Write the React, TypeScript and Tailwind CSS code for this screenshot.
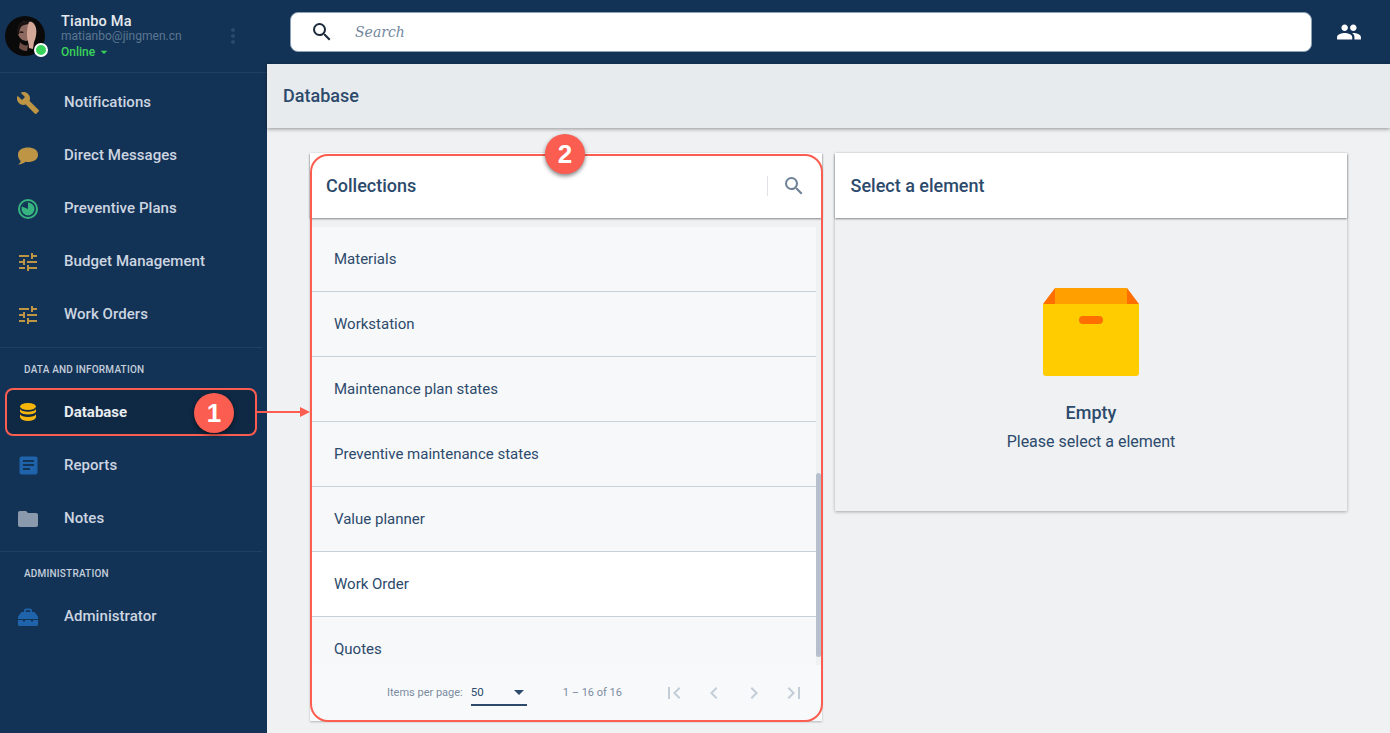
import React from "react";
import { MdBuild, MdTune, MdFolder, MdPeople, MdSearch, MdFirstPage, MdLastPage, MdChevronLeft, MdChevronRight, MdArrowDropDown, MdMoreVert } from "react-icons/md";

const Bubble = () => (
  <svg width="20" height="20" viewBox="0 0 20 20"><path fill="#bd9545" d="M10 1.500c5.400 0 10 2.200 10 7.200 0 5-4.600 7.300-10 7.300-.8 0-1.700 0-2.400-.2C6.100 17.300 3.300 18.300.2 18.500c1.300-1 2.200-2 2.500-3.600C1 13.500 0 11.300 0 8.700 0 3.700 4.600 1.500 10 1.500z"/></svg>
);
const Donut = () => (
  <svg width="20" height="20" viewBox="0 0 20 20"><circle cx="10" cy="10" r="9" fill="none" stroke="#36b37e" strokeWidth="2"/><circle cx="10" cy="10" r="6.500" fill="#36b37e"/><path d="M10 10V3.500A6.500 6.500 0 0 0 4 7.500z" fill="#133356"/></svg>
);
const Db = () => (
  <svg width="16" height="18" viewBox="0 0 16 18"><ellipse cx="8" cy="3.500" rx="8" ry="3.500" fill="#f5b50a"/><path d="M0 6c1 1.800 4 2.800 8 2.800S15 7.800 16 6v2.700c-1 1.800-4 2.800-8 2.800S1 10.500 0 8.700z" fill="#f5b50a"/><path d="M0 11.300c1 1.800 4 2.800 8 2.800s7-1 8-2.800v3.200c-1 2-4 3.500-8 3.500S1 16.500 0 14.500z" fill="#f5b50a"/></svg>
);
const Report = () => (
  <svg width="19" height="19" viewBox="0 0 19 19"><rect width="18" height="18" x=".5" y=".5" rx="2" fill="#1f63ab"/><path d="M4 5h11M4 9h11M4 13h7" stroke="#133356" strokeWidth="1.800"/></svg>
);
const Toolbox = () => (
  <svg width="20" height="18" viewBox="0 0 20 18"><path fill="#1f63ab" d="M6 4V2.500C6 1.300 7 .5 8 .5h4c1 0 2 .8 2 2V4h2.500L20 8.500V11H0V8.500L3.500 4zm1.800 0h4.400V2.300H7.800zM0 12h5v1.500h2V12h6v1.500h2V12h5v4.500c0 .8-.6 1.500-1.500 1.500h-17C.6 18 0 17.300 0 16.500z"/></svg>
);
const Avatar = () => (
  <svg width="40" height="40" viewBox="0 0 40 40">
    <clipPath id="av"><circle cx="20" cy="20" r="20"/></clipPath>
    <g clipPath="url(#av)">
      <rect width="40" height="40" fill="#0b0a0b"/>
      <ellipse cx="21" cy="15" rx="8.500" ry="10" fill="#8f6a60"/>
      <path d="M12 12c2-6 8-8 14-7 3 .5 4 2 4 4-5-1-10-1-13 1-2 1.500-3 5-3 9-2-2-3-4-2-7z" fill="#1a1312"/>
      <path d="M14 16c1-1 3-1 5 0l-1 1h-3z" fill="#2b1d1a"/>
      <path d="M15 26c2 3 6 4 8 3l-1 6c-3 0-6-1-8-3z" fill="#6e4f48"/>
      <path d="M24 6c3-1 6 2 7 6 1 4 0 10-2 14l-1 7-4-1c0-5-2-8-2-12 0-5 0-10 2-14z" fill="#d4a898"/>
    </g>
  </svg>
);

const items1 = [
  { l: "Notifications", i: <MdBuild size={24} className="text-[#bd9545]" /> },
  { l: "Direct Messages", i: <Bubble /> },
  { l: "Preventive Plans", i: <Donut /> },
  { l: "Budget Management", i: <MdTune size={24} className="text-[#bd9545]" /> },
  { l: "Work Orders", i: <MdTune size={24} className="text-[#bd9545]" /> },
];
const items2 = [
  { l: "Database", i: <Db />, active: true },
  { l: "Reports", i: <Report /> },
  { l: "Notes", i: <MdFolder size={24} className="text-[#8a99ab]" /> },
];

function NavItem({ l, i, active }: { l: string; i: React.ReactNode; active?: boolean }) {
  if (active) {
    return (
      <div className="flex h-[53px] pb-[3px] pl-[6px] pr-[11px] pt-[2px]">
        <div className="flex flex-1 items-center rounded-[8px] bg-[#0f2843]">
          <div className="ml-[10px] flex w-[24px] justify-center">{i}</div>
          <span className="ml-[24px] text-[15px] font-bold text-[#e8ecf0]">{l}</span>
        </div>
      </div>
    );
  }
  return (
    <div className="flex h-[53px] items-center">
      <div className="ml-[16px] flex w-[24px] justify-center">{i}</div>
      <span className="ml-[24px] text-[15px] font-medium tracking-[0.05px] text-[#ccd5e0]">{l}</span>
    </div>
  );
}

const SectionLabel = ({ t }: { t: string }) => (
  <div className="flex h-[42px] items-center pl-[24px] text-[10px] font-medium uppercase tracking-[0.2px] text-[#c4cedb]">{t}</div>
);

const rows = ["Materials", "Workstation", "Maintenance plan states", "Preventive maintenance states", "Value planner", "Work Order", "Quotes"];

export default function App() {
  return (
    <div className="relative flex h-[733px] w-[1390px] overflow-hidden bg-[#eff1f3] text-[#2c4a6b]" style={{ fontFamily: "Roboto, sans-serif" }}>
      <aside className="w-[267px] shrink-0 bg-[#133356]">
        <div className="flex h-[73px] border-b border-[#1e4064] pl-[5px] pt-[16px]">
          <div className="relative h-[40px] w-[40px]">
            <Avatar />
            <div className="absolute left-[29px] top-[27px] h-[14px] w-[14px] rounded-full border-2 border-white bg-[#38d35a]" />
          </div>
          <div className="-mt-[3px] ml-[16px] w-[124px]">
            <div className="h-[18px] text-[14.500px] font-medium leading-[18px] tracking-[0.2px] text-[#e6eaef]">Tianbo Ma</div>
            <div className="-mt-[2px] h-[15px] text-[12px] leading-[15px] tracking-[0.03px] text-[#5b7690]">matianbo@jingmen.cn</div>
            <div className="flex h-[15px] items-center text-[12px] font-medium text-[#38d35a]">Online<MdArrowDropDown size={16} className="ml-[1px] text-[#38d35a]" /></div>
          </div>
          <MdMoreVert size={24} className="ml-[36px] mt-[8px] text-[#2a4a6c]" />
        </div>
        <nav className="pt-[3px]">
          {items1.map((x) => <NavItem key={x.l} {...x} />)}
          <div className="mr-[5px] mt-[6px] border-t border-[#1e4064]" />
          <SectionLabel t="Data and information" />
          <div className="-mt-[4px]">{items2.map((x) => <NavItem key={x.l} {...x} />)}</div>
          <div className="mr-[5px] mt-[6px] border-t border-[#1e4064]" />
          <SectionLabel t="Administration" />
          <div className="-mt-[4px]"><NavItem l="Administrator" i={<Toolbox />} /></div>
        </nav>
      </aside>

      <main className="flex min-w-0 flex-1 flex-col">
        <header className="flex h-[64px] shrink-0 items-center bg-[#133356] pl-[23px]">
          <div className="flex h-[40px] w-[1022px] items-center rounded-[8px] border border-[#8ea0b4] bg-white pl-[19px]">
            <MdSearch size={24} className="text-[#1b2b3c]" />
            <span className="ml-[21px] text-[14px] italic text-[#7388a0]" style={{ fontFamily: "'DejaVu Serif', serif" }}>Search</span>
          </div>
          <MdPeople size={26} className="ml-[24px] text-white" />
        </header>
        <div className="flex h-[64px] shrink-0 items-center bg-[#e8ebee] pb-[2px] pl-[16px] text-[18px] font-medium shadow-[0_1px_4px_rgba(0,0,0,0.4)]">Database</div>

        <div className="flex gap-[13px] pl-[43px] pt-[25px]">
          <section className="h-[568px] w-[512px] bg-[#f8f9fb] shadow-[0_1px_2px_rgba(0,0,0,0.25)]">
            <div className="relative z-10 flex h-[65px] items-center justify-between bg-white pl-[16px] pr-[16px] shadow-[0_1px_2px_rgba(0,0,0,0.45)]">
              <span className="text-[18px] font-medium">Collections</span>
              <div className="flex h-[20px] items-center border-l border-[#dfe3e8] pl-[14px]"><MdSearch size={24} className="text-[#6d8196]" /></div>
            </div>
            <div className="flex h-[447px] bg-[#eff1f3] pt-[9px]">
              <div className="h-full w-[506px] overflow-hidden bg-[#f7f8fa]">
                {rows.map((r) => (
                  <div key={r} className={`flex h-[65px] items-center border-b border-[#c8d0d8] pl-[24px] text-[15px] ${r === "Work Order" ? "bg-white" : ""}`}>{r}</div>
                ))}
              </div>
              <div className="h-full w-[6px]">
                <div className="mt-[246px] h-[184px] w-[5px] rounded-[3px] bg-[#b5c0cc]" />
              </div>
            </div>
            <div className="flex h-[56px] items-center pl-[77px] pb-[1px] text-[11px] text-[#7b8ca0]">
              <span className="mt-[2px]">Items per page:</span>
              <div className="ml-[8px] flex h-[27px] w-[56px] items-center justify-between border-b-2 border-[#2c4a6b] text-[11.500px] text-[#2c4a6b]">
                <span className="mt-[3px]">50</span>
                <MdArrowDropDown size={24} className="-mr-[4px] text-[#2c4a6b]" />
              </div>
              <span className="ml-[36px] mt-[1px]">1 – 16 of 16</span>
              <div className="ml-[40px] flex gap-[16px] text-[#c2cdd7]">
                <MdFirstPage size={24} /><MdChevronLeft size={24} /><MdChevronRight size={24} /><MdLastPage size={24} />
              </div>
            </div>
          </section>

          <section className="h-[358px] w-[512px] bg-[#eff1f3] shadow-[0_1px_3px_rgba(0,0,0,0.3)]">
            <div className="flex h-[65px] items-center bg-white pl-[15.500px] text-[18px] font-medium shadow-[0_1px_2px_rgba(0,0,0,0.45)]">Select a element</div>
            <div className="flex flex-col items-center pt-[70px]">
              <svg width="96" height="88" viewBox="0 0 96 88">
                <path d="M12 0h72v16H12z" fill="#ffa000"/>
                <path d="M12 0L0 16h12zM84 0l12 16H84z" fill="#ff6f00"/>
                <path d="M0 16h96v69a3 3 0 0 1-3 3H3a3 3 0 0 1-3-3z" fill="#ffcc00"/>
                <rect x="36" y="28" width="24" height="8" rx="4" fill="#ff6f00"/>
              </svg>
              <div className="mt-[25px] text-[18px] font-medium leading-[24px]">Empty</div>
              <div className="mt-[5px] text-[16px] leading-[24px]">Please select a element</div>
            </div>
          </section>
        </div>
      </main>

      {/* annotations over the page */}
      <div className="absolute left-[5px] top-[388px] z-20 h-[48px] w-[252px] rounded-[8px] border-2 border-[#fb5d50]" />
      <div className="absolute left-[257px] top-[411px] z-20 h-[2px] w-[46px] bg-[#fb5d50]" />
      <div className="absolute left-[300px] top-[407px] z-20 h-0 w-0 border-y-[5px] border-l-[10px] border-y-transparent border-l-[#fb5d50]" />
      <div className="absolute left-[194px] top-[393px] z-20 flex h-[40px] w-[40px] items-center justify-center rounded-full bg-[#fb5d50] text-[26px] font-bold text-white shadow-[0_2px_4px_rgba(0,0,0,0.5)]" style={{ fontFamily: "'Liberation Sans', sans-serif" }}>1</div>
      <div className="absolute left-[310px] top-[154px] z-20 h-[568px] w-[513px] rounded-[18px] border-2 border-[#fb5d50]" />
      <div className="absolute left-[545px] top-[134px] z-20 flex h-[40px] w-[40px] items-center justify-center rounded-full bg-[#fb5d50] text-[26px] font-bold text-white shadow-[0_2px_4px_rgba(0,0,0,0.5)]" style={{ fontFamily: "'Liberation Sans', sans-serif" }}>2</div>
    </div>
  );
}
